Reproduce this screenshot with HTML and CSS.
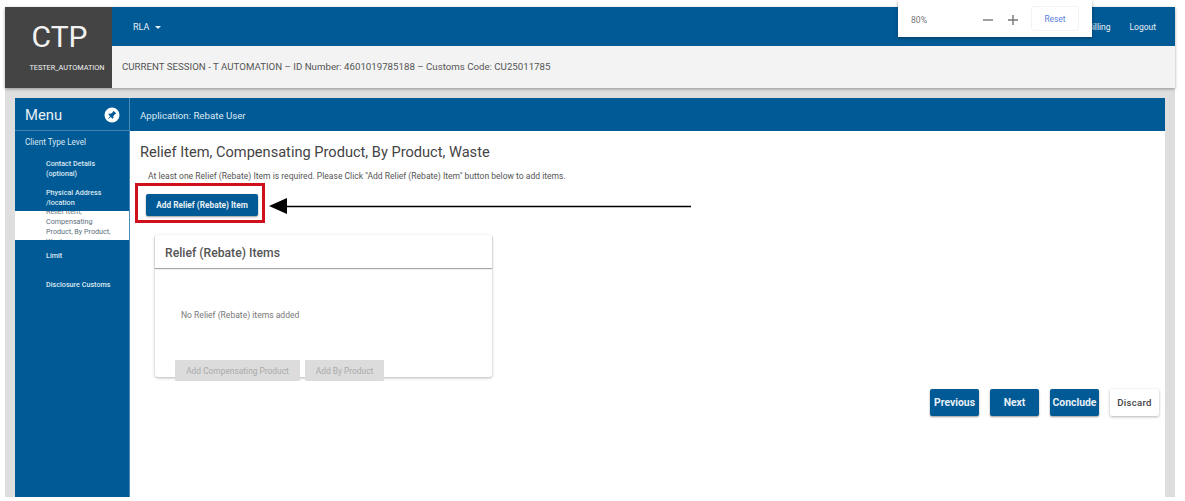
FILE: index.html
```html
<!DOCTYPE html>
<html lang="en">
<head>
    <meta charset="UTF-8">
    <title>CTP</title>
    <link rel="stylesheet" href="styles.css">
</head>
<body>
<div class="app">
    <header class="header">
        <div class="brand">
            <div class="brand-name">CTP</div>
            <div class="brand-user">TESTER_AUTOMATION</div>
        </div>
        <div class="header-main">
            <div class="topbar">
                <span class="topbar-role">RLA <i class="caret"></i></span>
                <span class="topbar-link topbar-billing">Billing</span>
                <span class="topbar-link">Logout</span>
            </div>
            <div class="session">CURRENT SESSION - T AUTOMATION – ID Number: 4601019785188 – Customs Code: CU25011785</div>
        </div>
    </header>

    <div class="zoom-popup">
        <span class="zoom-value">80%</span>
        <span class="zoom-btn">
            <svg width="16" height="16" viewBox="0 0 16 16"><path d="M3 8h10" stroke="#777" stroke-width="1.4"/></svg>
        </span>
        <span class="zoom-btn">
            <svg width="16" height="16" viewBox="0 0 16 16"><path d="M3 8h10M8 3v10" stroke="#777" stroke-width="1.4"/></svg>
        </span>
        <span class="zoom-reset">Reset</span>
    </div>

    <div class="body-wrap">
        <div class="panel">
            <aside class="menu">
                <div class="menu-head">
                    <span>Menu</span>
                    <svg class="pin" width="16" height="16" viewBox="0 0 16 16">
                        <circle cx="8" cy="8" r="7.5" fill="#fff"/>
                        <path d="M9.5 3.8l2.8 2.8-1.2.5-1.8 2.2.2 1.8-1 .6-1.7-1.8-2.2 2-.4-.4 2-2.2-1.8-1.7.6-1 1.8.2 2.2-1.8z" fill="#005a96"/>
                    </svg>
                </div>
                <div class="menu-title">Client Type Level</div>
                <ul class="menu-list">
                    <li class="menu-item item-contact">Contact Details (optional)</li>
                    <li class="menu-item item-address">Physical Address /location</li>
                    <li class="menu-item item-active"><div class="active-text">Relief Item, Compensating Product, By Product, Waste</div></li>
                    <li class="menu-item item-limit">Limit</li>
                    <li class="menu-item item-disclosure">Disclosure Customs</li>
                </ul>
            </aside>
            <main class="content">
                <div class="content-head">Application: Rebate User</div>
                <div class="content-body">
                    <h1 class="page-title">Relief Item, Compensating Product, By Product, Waste</h1>
                    <p class="page-note">At least one Relief (Rebate) Item is required. Please Click "Add Relief (Rebate) Item" button below to add items.</p>
                    <div class="add-row">
                        <button class="btn btn-add">Add Relief (Rebate) Item</button>
                    </div>
                    <section class="card">
                        <div class="card-head">Relief (Rebate) Items</div>
                        <div class="card-body">
                            <p class="card-empty">No Relief (Rebate) items added</p>
                            <div class="card-actions">
                                <button class="btn-off btn-comp">Add Compensating Product</button>
                                <button class="btn-off btn-by">Add By Product</button>
                            </div>
                        </div>
                    </section>
                    <div class="actions">
                        <button class="btn btn-nav">Previous</button>
                        <button class="btn btn-nav">Next</button>
                        <button class="btn btn-nav">Conclude</button>
                        <button class="btn-discard">Discard</button>
                    </div>
                </div>
            </main>
        </div>
    </div>

    <!-- annotation over the screenshot -->
    <div class="mark-box"></div>
    <svg class="mark-arrow" width="424" height="18" viewBox="0 0 424 18">
        <path d="M0 9L18 1v16z" fill="#000"/>
        <path d="M16 9.5h406" stroke="#000" stroke-width="1.5"/>
    </svg>
</div>
</body>
</html>
```

FILE: styles.css
```css
* {
    box-sizing: border-box;
}

html, body {
    margin: 0;
    height: 100%;
    background: #fff;
    overflow: hidden;
}

body {
    padding: 7px 10px 4px 5px;
    font-family: Roboto, "Liberation Sans", sans-serif;
    color: #444;
}

.app {
    height: 490px;
    display: flex;
    flex-direction: column;
}

.header {
    display: flex;
    height: 81px;
    flex: none;
    box-shadow: 0 1px 3px rgba(0,0,0,.35);
    position: relative;
}

.brand {
    width: 107px;
    flex: none;
    background: #444;
    color: #f2f2f2;
    text-align: center;
}

.brand-name {
    font-size: 30px;
    line-height: 34px;
    margin-top: 13px;
    margin-left: 2px;
}

.brand-user {
    font-size: 7.3px;
    line-height: 10px;
    margin-top: 9px;
    margin-left: 17px;
    white-space: nowrap;
}

.header-main {
    flex: 1;
    display: flex;
    flex-direction: column;
}

.topbar {
    height: 39px;
    flex: none;
    background: #005a96;
    color: #e8eff5;
    font-size: 9px;
    display: flex;
    align-items: center;
    padding-top: 1px;
    padding-left: 21px;
    padding-right: 19px;
}

.topbar-role {
    margin-right: auto;
}

.caret {
    display: inline-block;
    width: 0;
    height: 0;
    margin-left: 3px;
    vertical-align: middle;
    border-left: 3px solid transparent;
    border-right: 3px solid transparent;
    border-top: 3px solid #e8eff5;
}

.topbar-link {
    font-size: 8.5px;
}

.topbar-billing {
    margin-right: 19px;
}

.session {
    flex: 1;
    background: #f3f3f3;
    font-size: 9.7px;
    display: flex;
    align-items: center;
    padding-left: 10px;
    padding-bottom: 1px;
    color: #555;
}

.zoom-popup {
    position: absolute;
    left: 898px;
    top: 0;
    width: 194px;
    height: 37px;
    background: #fff;
    box-shadow: 0 1px 3px rgba(0,0,0,.35);
    display: flex;
    align-items: center;
    padding: 3px 13px 0 13px;
    z-index: 2;
}

.zoom-value {
    font-size: 8.6px;
    color: #777;
    margin-right: auto;
}

.zoom-btn {
    display: flex;
    margin-right: 9px;
}

.zoom-reset {
    width: 48px;
    height: 25px;
    margin-left: 1px;
    margin-bottom: 3px;
    border: 1px solid #f3f3f3;
    border-radius: 3px;
    color: #5c7fdb;
    font-size: 8.4px;
    display: flex;
    align-items: center;
    justify-content: center;
}

.body-wrap {
    flex: 1;
    min-height: 0;
    background: #dedede;
    padding: 10px 10px 0;
}

.panel {
    height: 100%;
    display: flex;
    background: #fff;
}

.menu {
    width: 115px;
    flex: none;
    background: #005a96;
    color: #dce8f1;
    border-right: 1px solid #4d8ab5;
}

.menu-head {
    height: 33px;
    display: flex;
    align-items: center;
    justify-content: space-between;
    padding: 1px 9px 0 10px;
    color: #e8eff5;
    font-size: 14.8px;
    border-bottom: 1px solid #3f83b3;
}

.menu-title {
    font-size: 8.2px;
    line-height: 10px;
    padding: 6px 0 0 10px;
    height: 25px;
}

.menu-list {
    margin: 0;
    padding: 0;
    list-style: none;
}

.menu-item {
    font-size: 7.2px;
    line-height: 10px;
    padding-left: 31px;
    padding-right: 14px;
    font-weight: 500;
}

.item-contact {
    height: 27px;
    padding-top: 3px;
}

.item-address {
    height: 28px;
    padding-top: 5px;
    padding-right: 8px;
}

.item-active {
    height: 29px;
    background: #fff;
    color: #5c6f7e;
    overflow: hidden;
    font-weight: 400;
    padding-right: 16px;
}

.active-text {
    margin-top: -4px;
}

.item-limit {
    height: 29px;
    padding-top: 11px;
}

.item-disclosure {
    padding-top: 11px;
    padding-right: 0;
    white-space: nowrap;
}

.content {
    flex: 1;
    min-width: 0;
}

.content-head {
    height: 33px;
    background: #005a96;
    color: #dce8f1;
    font-size: 9.7px;
    display: flex;
    align-items: center;
    padding-left: 10px;
    padding-top: 1px;
}

.content-body {
    padding: 13px 6px 0 10px;
}

.page-title {
    margin: 0;
    font-size: 14.6px;
    line-height: 16px;
    font-weight: 400;
    color: #444;
}

.page-note {
    margin: 11px 0 0 8px;
    font-size: 8.55px;
    line-height: 10px;
    color: #555;
}

.add-row {
    margin: 4px 0 0 -3px;
    width: 130px;
    height: 40px;
    border: 3px solid transparent;
    display: flex;
    align-items: center;
    justify-content: center;
}

.btn {
    border: 0;
    border-radius: 2px;
    background: #005a96;
    color: #e8eff5;
    font-family: inherit;
    font-weight: 700;
    padding: 0;
    box-shadow: 0 1px 2px rgba(0,0,0,.4);
}

.btn-add {
    flex: none;
    width: 112px;
    height: 22px;
    font-size: 8.3px;
}

.card {
    width: 337px;
    height: 142px;
    margin: 10px 0 0 15px;
    background: #fff;
    border-radius: 3px;
    box-shadow: 0 1px 3px rgba(0,0,0,.3);
}

.card-head {
    height: 33px;
    padding: 3px 10px 0;
    display: flex;
    align-items: center;
    font-size: 12.2px;
    font-weight: 500;
    color: #555;
    box-shadow: 0 1px 1px rgba(0,0,0,.35);
}

.card-body {
    padding: 42px 20px 0;
}

.card-empty {
    margin: 0 0 0 6px;
    font-size: 8.55px;
    line-height: 10px;
    color: #777;
}

.card-actions {
    display: flex;
    gap: 5px;
    margin-top: 40px;
    margin-bottom: -10px;
}

.btn-off {
    height: 21px;
    border: 0;
    border-radius: 1px;
    background: #dcdcdc;
    color: #aaa;
    font-family: inherit;
    font-size: 8.4px;
    padding: 0;
}

.btn-comp {
    width: 125px;
}

.btn-by {
    width: 79px;
}

.actions {
    display: flex;
    justify-content: flex-end;
    margin-top: 12px;
}

.btn-nav {
    width: 49px;
    height: 27px;
    margin-right: 11px;
    font-size: 10.4px;
    font-weight: 700;
}

.btn-discard {
    width: 49px;
    height: 27px;
    border: 0;
    border-radius: 2px;
    background: #fff;
    color: #444;
    font-family: inherit;
    font-size: 9.6px;
    font-weight: 500;
    letter-spacing: .3px;
    padding: 0;
    box-shadow: 0 1px 3px rgba(0,0,0,.3);
}

.mark-box {
    position: absolute;
    left: 135px;
    top: 183px;
    width: 130px;
    height: 40px;
    border: 3px solid #d0101c;
}

.mark-arrow {
    position: absolute;
    left: 269px;
    top: 197px;
}
```
